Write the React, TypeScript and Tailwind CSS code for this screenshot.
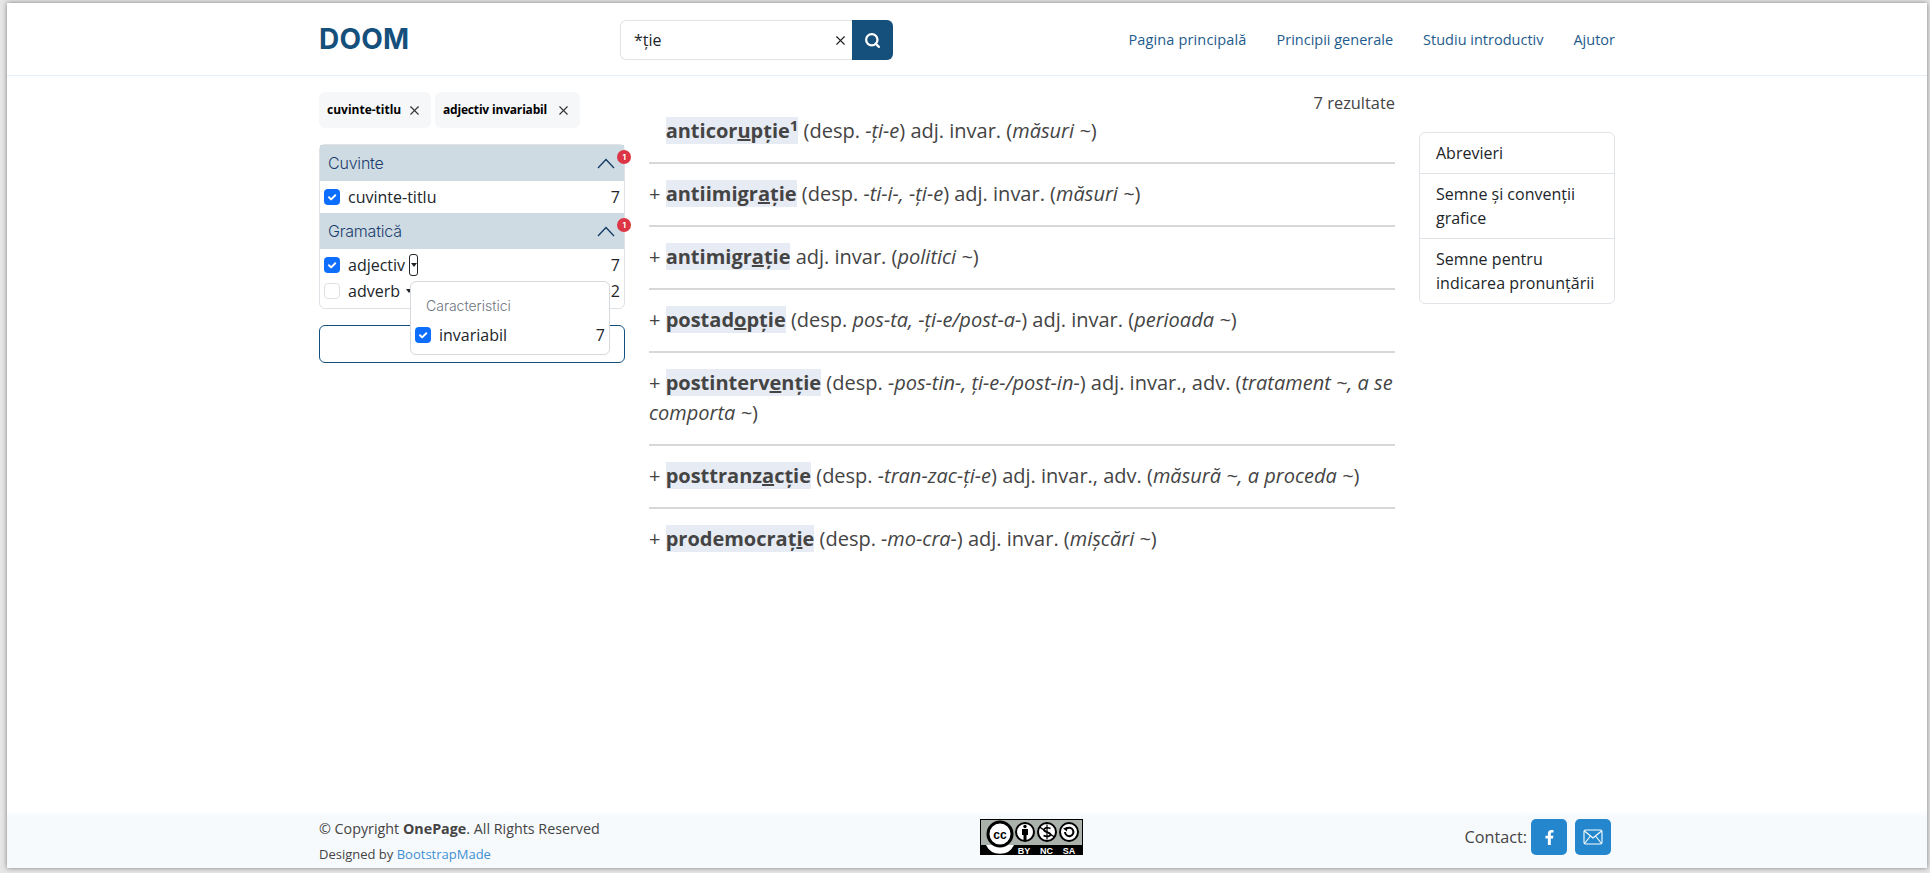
import React from "react";
import { X, Search } from "lucide-react";
import { FaFacebookF } from "react-icons/fa";

const sans = "font-['Open_Sans',sans-serif]";

function Check({ on = true }: { on?: boolean }) {
  return (
    <span className={`w-[16px] h-[16px] rounded-[4px] flex items-center justify-center shrink-0 ${on ? "bg-[#0d6efd]" : "bg-white border border-[#dee2e6]"}`}>
      {on && (
        <svg width="12" height="12" viewBox="0 0 20 20" fill="none" stroke="#fff" strokeWidth="3.2" strokeLinecap="round" strokeLinejoin="round">
          <path d="M5 10.5l3.5 3.5 7-7" />
        </svg>
      )}
    </span>
  );
}

function Caret() {
  return <span className="inline-block w-0 h-0 border-x-[3.5px] border-x-transparent border-t-[4px] border-t-[#212529]" />;
}

function Badge() {
  return (
    <span className="absolute -right-[7px] top-[5px] w-[14px] h-[14px] rounded-full bg-[#dc3545] text-white text-[8px] font-bold leading-[14px] text-center">1</span>
  );
}

function GroupHead({ title }: { title: string }) {
  return (
    <div className="relative h-[36px] bg-[#cfdbe3] flex items-center justify-between pl-[8px] pr-[9px] text-[#1b3d6d] text-[16px] font-['Inter',sans-serif] font-light tracking-[-0.2px]">
      <span>{title}</span>
      <svg width="18" height="11" viewBox="0 0 18 11" fill="none" stroke="#123a62" strokeWidth="1.3">
        <path d="M1 10L9 1.500l8 8.500" />
      </svg>
      <Badge />
    </div>
  );
}

function Row({ label, count, on = true, caret }: { label: string; count: number; on?: boolean; caret?: React.ReactNode }) {
  return (
    <div className="flex items-center h-[26px] px-[4px] text-[16px] text-[#212529]">
      <Check on={on} />
      <span className="ml-[8px]">{label}</span>
      {caret}
      <span className="ml-auto">{count}</span>
    </div>
  );
}

function Head({ children }: { children: React.ReactNode }) {
  return <span className="font-bold bg-[#e7ebf3]">{children}</span>;
}

function Entry({ plus = true, last = false, children }: { plus?: boolean; last?: boolean; children: React.ReactNode }) {
  return (
    <div className={`pt-[15px] pb-[16px] text-[20px] leading-[30px] text-[#444444] ${last ? "" : "border-b-2 border-[#d8d8d8]"}`}>
      <span className={plus ? "" : "invisible"}>+ </span>
      {children}
    </div>
  );
}

const U = ({ children }: { children: React.ReactNode }) => <u className="underline">{children}</u>;

function Tag({ label, labelClass }: { label: string; labelClass: string }) {
  return (
    <span className="h-[36px] rounded-[6px] bg-[#f6f7f9] flex items-center pl-[8px] pr-[9px] text-[12px] font-bold text-black gap-[5px]">
      <span className={labelClass}>{label}</span>
      <X size={15} strokeWidth={1.7} className="text-[#333]" />
    </span>
  );
}

function CcLogo() {
  return (
    <svg width="103" height="36" viewBox="0 0 103 36" className="shrink-0">
      <rect x="0.500" y="0.500" width="102" height="35" fill="#aab2ab" stroke="#000" />
      <rect x="0" y="26" width="103" height="10" fill="#000" />
      <path d="M6 26a15.500 15.500 0 0 0 28 0" fill="#fff" />
      <circle cx="20" cy="15" r="12" fill="#fff" stroke="#000" strokeWidth="3" />
      <text x="20" y="19.500" textAnchor="middle" fontFamily="Liberation Sans, sans-serif" fontWeight="700" fontSize="12" fill="#000">cc</text>
      <circle cx="45" cy="13" r="9" fill="#fff" stroke="#000" strokeWidth="2" />
      <circle cx="45" cy="7.500" r="1.700" fill="#000" />
      <path d="M42 10h6v6h-1.500v5.500h-3V16H42z" fill="#000" />
      <circle cx="67" cy="13" r="9" fill="#fff" stroke="#000" strokeWidth="2" />
      <path d="M59.500 8l15 10" stroke="#000" strokeWidth="1.500" />
      <path d="M70.500 9.500c-3-1.500-6.500-.5-6.500 1.500c0 3 6.500 1.500 6.500 4.500c0 2-4 2.500-7 1" fill="none" stroke="#000" strokeWidth="1.700" />
      <path d="M67 5.500v15" stroke="#000" strokeWidth="1.200" />
      <circle cx="89" cy="13" r="9" fill="#fff" stroke="#000" strokeWidth="2" />
      <path d="M85 13a4.200 4.200 0 1 0 1.400-3.200" fill="none" stroke="#000" strokeWidth="2" />
      <path d="M83 9.500l4-1.500v4.500z" fill="#000" />
      <text x="44" y="34.500" textAnchor="middle" fontFamily="Liberation Sans, sans-serif" fontWeight="700" fontSize="9" fill="#fff">BY</text>
      <text x="66.500" y="34.500" textAnchor="middle" fontFamily="Liberation Sans, sans-serif" fontWeight="700" fontSize="9" fill="#fff">NC</text>
      <text x="89" y="34.500" textAnchor="middle" fontFamily="Liberation Sans, sans-serif" fontWeight="700" fontSize="9" fill="#fff">SA</text>
    </svg>
  );
}

export default function App() {
  return (
    <div className={`${sans} h-[873px] w-[1930px] overflow-hidden bg-[#e6e6e6] pt-[3px] pb-[5px] pl-[7px] pr-[3px]`}>
      <div className="h-full bg-white flex flex-col shadow-[0_0_5px_rgba(0,0,0,0.45)]">
        <header className="h-[73px] shrink-0 border-b border-[#e6edf3]">
          <div className="w-[1296px] mx-auto h-full flex items-center">
            <div className="w-[301px] text-[#15507c] text-[28px] font-bold font-['Inter',sans-serif] tracking-[0.2px]">DOOM</div>
            <div className="flex mt-[2px]">
              <div className="w-[232px] h-[40px] bg-white border border-[#e0e4e8] border-r-0 rounded-l-[6px] flex items-center justify-between pl-[13px] pr-[4px] text-[16px] text-[#212529]">
                <span>*ție</span>
                <X size={15} strokeWidth={1.800} className="text-[#222]" />
              </div>
              <div className="w-[41px] h-[40px] bg-[#15507c] rounded-r-[6px] flex items-center justify-center">
                <Search size={17} strokeWidth={3.2} className="text-white" />
              </div>
            </div>
            <nav className="ml-auto flex gap-[30px] text-[14.5px] text-[#1e5b8c] mt-[1px]">
              <span className="tracking-[0.14px]">Pagina principală</span>
              <span>Principii generale</span>
              <span>Studiu introductiv</span>
              <span>Ajutor</span>
            </nav>
          </div>
        </header>

        <main className="flex-1 min-h-0">
          <div className="w-[1296px] mx-auto flex">
            <aside className="w-[306px] shrink-0 pt-[16px]">
              <div className="flex gap-[4px]">
                <Tag label="cuvinte-titlu" labelClass="w-[75px]" />
                <Tag label="adjectiv invariabil" labelClass="w-[108px] tracking-[-0.18px]" />
              </div>
              <div className="relative mt-[16px] border border-[#dee2e6] rounded-[6px]">
                <GroupHead title="Cuvinte" />
                <div className="py-[3px]"><Row label="cuvinte-titlu" count={7} /></div>
                <GroupHead title="Gramatică" />
                <div className="pt-[3px] h-[59px]">
                  <Row
                    label="adjectiv"
                    count={7}
                    caret={
                      <span className="ml-[4px] w-[9px] h-[22px] border border-[#212529] rounded-[3px] flex items-center justify-center">
                        <Caret />
                      </span>
                    }
                  />
                  <Row
                    label="adverb"
                    count={2}
                    on={false}
                    caret={<span className="ml-[6px] flex"><Caret /></span>}
                  />
                </div>
                <div className="absolute left-[90px] top-[136px] w-[200px] h-[74px] bg-white border border-[#d5d8dc] rounded-[6px] z-10">
                  <div className="pl-[15px] pt-[15px] text-[14px] leading-[18px] text-[#6c757d] font-['Inter',sans-serif] font-light">Caracteristici</div>
                  <div className="flex items-center px-[4px] mt-[8px] text-[16px] text-[#212529] h-[24px]">
                    <Check />
                    <span className="ml-[8px]">invariabil</span>
                    <span className="ml-auto">7</span>
                  </div>
                </div>
              </div>
              <div className="mt-[16px] h-[38px] border border-[#15507c] rounded-[6px]" />
            </aside>

            <section className="w-[746px] shrink-0 ml-[24px]">
              <div className="text-right text-[16.4px] leading-[24px] text-[#444444] pt-[15px] -mb-[14px]">7 rezultate</div>
              <Entry plus={false}>
                <Head>anticor<U>u</U>pție<sup className="text-[15px] font-bold">1</sup></Head> (desp. <i>-ți-e</i>) adj. invar. (<i>măsuri ~</i>)
              </Entry>
              <Entry>
                <Head>antiimigr<U>a</U>ție</Head> (desp. <i>-ti-i-, -ți-e</i>) adj. invar. (<i>măsuri ~</i>)
              </Entry>
              <Entry>
                <Head>antimigr<U>a</U>ție</Head> adj. invar. (<i>politici ~</i>)
              </Entry>
              <Entry>
                <Head>postad<U>o</U>pție</Head> (desp. <i>pos-ta, -ți-e/post-a-</i>) adj. invar. (<i>perioada ~</i>)
              </Entry>
              <Entry>
                <Head>postinterv<U>e</U>nție</Head> (desp. <i>-pos-tin-, ți-e-/post-in-</i>) adj. invar., adv. (<i>tratament ~, a se comporta ~</i>)
              </Entry>
              <Entry>
                <Head>posttranz<U>a</U>cție</Head> (desp. <i>-tran-zac-ți-e</i>) adj. invar., adv. (<i>măsură ~, a proceda ~</i>)
              </Entry>
              <Entry last>
                <Head>prodemocraț<U>i</U>e</Head> (desp. <i>-mo-cra-</i>) adj. invar. (<i>mișcări ~</i>)
              </Entry>
            </section>

            <aside className="w-[196px] shrink-0 ml-[24px] pt-[56px]">
              <div className="border border-[#e0e4e8] rounded-[6px] text-[16px] leading-[24px] text-[#212529]">
                <div className="px-[16px] py-[8px] border-b border-[#e0e4e8] h-[41px]">Abrevieri</div>
                <div className="px-[16px] py-[8px] border-b border-[#e0e4e8]">Semne și convenții grafice</div>
                <div className="pl-[16px] py-[8px] tracking-[0.05px]">Semne pentru indicarea pronunțării</div>
              </div>
            </aside>
          </div>
        </main>

        <footer className="h-[58px] shrink-0 bg-[linear-gradient(#ffffff,#f7fafd_6px)]">
          <div className="w-[1296px] mx-auto h-full flex items-center">
            <div className="w-[661px] text-[#444444] shrink-0 pt-[3px]">
              <div className="text-[14.3px] leading-[21px]">© Copyright <b>OnePage</b>. All Rights Reserved</div>
              <div className="text-[13px] leading-[20px] mt-[5px]">Designed by <span className="text-[#3f8fd2]">BootstrapMade</span></div>
            </div>
            <div className="-mt-[4px] flex"><CcLogo /></div>
            <div className="ml-auto -mt-[4px] flex items-center mr-[4px] text-[16.2px] text-[#444444]">
              <span className="mr-[4px]">Contact:</span>
              <span className="w-[36px] h-[36px] rounded-[5px] bg-[#2487ce] flex items-center justify-center"><FaFacebookF size={15} className="text-white" /></span>
              <span className="ml-[8px] w-[36px] h-[36px] rounded-[5px] bg-[#2487ce] flex items-center justify-center">
                <svg width="20" height="16" viewBox="0 0 20 16" fill="none" stroke="#fff" strokeWidth="1.100">
                  <rect x="1" y="1" width="18" height="14" rx="1.500" />
                  <path d="M1.500 2l8.500 7 8.500-7M1.500 14.500L7.500 7M18.500 14.500L12.500 7" />
                </svg>
              </span>
            </div>
          </div>
        </footer>
      </div>
    </div>
  );
}
